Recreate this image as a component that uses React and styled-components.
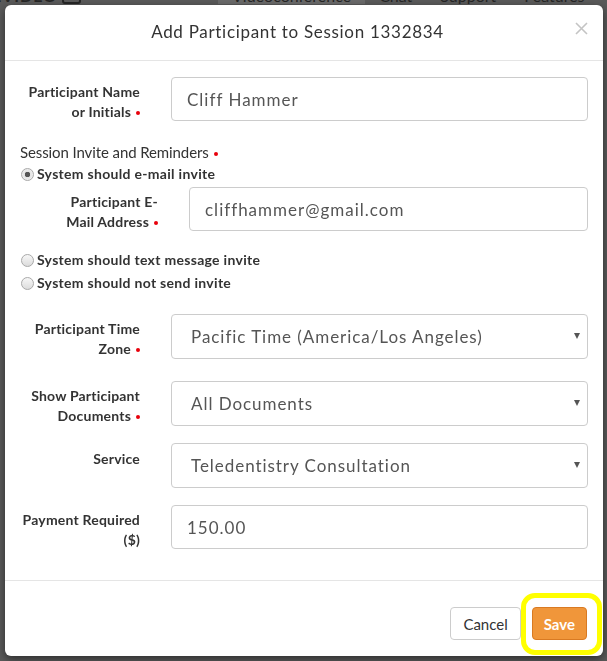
import React from 'react';
import styled, { createGlobalStyle } from 'styled-components';

const GlobalStyle = createGlobalStyle`
	html, body {
		margin: 0;
		background: #5a5a5a;
		font-family: Lato, "Open Sans", sans-serif;
		color: #333;
	}
	* {
		box-sizing: border-box;
	}
`;

// page behind the dimmed overlay, only its top edge peeks out
const PageNav = styled.div`
	display: flex;
	align-items: flex-end;
	height: 8px;
	margin-top: -4px;
	overflow: hidden;
	font-size: 16px;
	line-height: 16px;
	color: #262626;
`;

const Logo = styled.div`
	display: flex;
	align-items: flex-end;
	gap: 5px;
	margin-left: -8px;
	width: 238px;
	font-weight: 700;
	letter-spacing: 1px;
`;

const LogoBox = styled.span`
	display: inline-block;
	width: 19px;
	height: 12px;
	border: 2px solid #262626;
	border-radius: 3px;
`;

const NavItem = styled.span`
	padding: 0 14px;
	height: 16px;
	background: ${(p) => (p.$active ? '#6b6b6b' : 'transparent')};
`;

const Overlay = styled.div`
	position: fixed;
	inset: 0;
	padding: 5px 4px 0 5px;
`;

const Modal = styled.div`
	width: 598px;
	background: #fff;
	border-radius: 6px;
	box-shadow: 0 3px 9px rgba(0, 0, 0, 0.5);
`;

const Header = styled.div`
	display: flex;
	align-items: center;
	height: 56px;
	padding: 0 15px;
	border-bottom: 1px solid #e5e5e5;
`;

const Title = styled.h4`
	flex: 1;
	margin: 0;
	text-align: center;
	font-size: 17px;
	font-weight: 400;
	letter-spacing: 0.7px;
	color: #333;
	padding-bottom: 3px;
`;

const Close = styled.button`
	display: flex;
	width: 13px;
	height: 13px;
	padding: 0;
	border: 0;
	background: none;
	margin-top: -8px;
`;

const Body = styled.div`
	padding: 0 15px 30px;
`;

const Row = styled.div`
	display: grid;
	grid-template-columns: ${(p) => (p.$indent ? '138px' : '120px')} 1fr;
	column-gap: 31px;
	align-items: start;
	margin-top: ${(p) => p.$top || 0}px;
`;

const Label = styled.label`
	padding-top: ${(p) => (p.$single ? 6 : 5)}px;
	text-align: right;
	font-size: 14px;
	font-weight: 700;
	letter-spacing: 0.2px;
	line-height: 20px;
	color: #333;
`;

const Required = styled.span`
	&::after {
		content: '';
		display: inline-block;
		width: 4px;
		height: 4px;
		margin-left: 5px;
		border-radius: 50%;
		background: #e8000b;
		vertical-align: middle;
	}
`;

const Input = styled.input`
	width: 100%;
	height: 44px;
	padding: 0 0 0 15px;
	border: 1px solid #ccc;
	border-radius: 4px;
	font-family: Lato, "Open Sans", sans-serif;
	font-size: 17px;
	letter-spacing: 1px;
	color: #555;
	outline: none;
`;

const SelectWrap = styled.div`
	position: relative;
`;

const Select = styled.select`
	width: 100%;
	height: 45px;
	padding: 0 30px 0 19px;
	appearance: none;
	border: 1px solid #ccc;
	border-radius: 4px;
	background: #fff;
	font-family: Lato, "Open Sans", sans-serif;
	font-size: 17px;
	letter-spacing: 0.95px;
	color: #555;
	outline: none;
`;

const Caret = styled.span`
	position: absolute;
	right: 8px;
	top: 19px;
	width: 0;
	height: 0;
	border-left: 3.5px solid transparent;
	border-right: 3.5px solid transparent;
	border-top: 6px solid #555;
	pointer-events: none;
`;

const GroupLabel = styled.div`
	margin-top: ${(p) => p.$top || 0}px;
	font-size: 15px;
	letter-spacing: -0.1px;
	line-height: 20px;
	color: #333;
`;

const RadioLine = styled.label`
	display: flex;
	align-items: center;
	gap: 3px;
	margin-top: ${(p) => p.$top || 0}px;
	font-size: 14px;
	font-weight: 700;
	letter-spacing: 0.3px;
	line-height: 20px;
	color: #333;
`;

const RadioDot = styled.span`
	width: 13px;
	height: 13px;
	margin-left: 1px;
	border: 1px solid #a9a9a9;
	border-radius: 50%;
	background: ${(p) =>
		p.$checked
			? 'radial-gradient(circle, #555 0 2.5px, #e4e4e4 3px, #f5f5f5 100%)'
			: 'linear-gradient(#f7f7f7, #dcdcdc)'};
`;

const Footer = styled.div`
	display: flex;
	justify-content: flex-end;
	gap: 11px;
	padding: 26px 16px 16px;
	border-top: 1px solid #e5e5e5;
`;

const Button = styled.button`
	position: relative;
	height: 33px;
	padding: 0 ${(p) => (p.$primary ? 11 : 12)}px;
	border: 1px solid ${(p) => (p.$primary ? '#d97a22' : '#ccc')};
	border-radius: 4px;
	background: ${(p) => (p.$primary ? '#f0963a' : '#fff')};
	color: ${(p) => (p.$primary ? '#fff' : '#333')};
	font-family: Lato, "Open Sans", sans-serif;
	font-size: 15px;
	font-weight: ${(p) => (p.$primary ? 700 : 400)};
`;

const Highlight = styled.span`
	position: absolute;
	left: -12px;
	right: -16px;
	top: -15px;
	bottom: -16px;
	border: 5px solid #ffff00;
	border-radius: 14px;
	pointer-events: none;
`;

function Field({ label, required, single, children, ...rest }) {
	return (
		<Row {...rest}>
			<Label $single={single}>
				{required ? <Required>{label}</Required> : label}
			</Label>
			{children}
		</Row>
	);
}

function Dropdown({ value }) {
	return (
		<SelectWrap>
			<Select defaultValue={value}>
				<option>{value}</option>
			</Select>
			<Caret />
		</SelectWrap>
	);
}

export default function App() {
	return (
		<>
			<GlobalStyle />
			<PageNav>
				<Logo>
					EVIDEO <LogoBox />
				</Logo>
				<NavItem $active>Videoconference</NavItem>
				<NavItem>Chat</NavItem>
				<NavItem>Support</NavItem>
				<NavItem>Features ▾</NavItem>
			</PageNav>
			<Overlay>
				<Modal>
					<Header>
						<Title>Add Participant to Session 1332834</Title>
						<Close aria-label="Close">
							<svg width="13" height="13" viewBox="0 0 13 13">
								<path d="M1 1L12 12M12 1L1 12" stroke="#c4c4c4" strokeWidth="1.6" />
							</svg>
						</Close>
					</Header>
					<Body>
						<Field $top={16} required label={<>Participant Name<br />or Initials</>}>
							<Input defaultValue="Cliff Hammer" />
						</Field>

						<GroupLabel $top={20}>
							<Required>Session Invite and Reminders</Required>
						</GroupLabel>
						<RadioLine $top={2}>
							<RadioDot $checked /> System should e-mail invite
						</RadioLine>
						<Field $indent $top={3} required label={<>Participant E-<br />Mail Address</>}>
							<Input defaultValue="cliffhammer@gmail.com" />
						</Field>
						<RadioLine $top={18}>
							<RadioDot /> System should text message invite
						</RadioLine>
						<RadioLine $top={3}>
							<RadioDot /> System should not send invite
						</RadioLine>

						<Field $top={21} required label={<>Participant Time<br />Zone</>}>
							<Dropdown value="Pacific Time (America/Los Angeles)" />
						</Field>
						<Field $top={22} required label={<>Show Participant<br />Documents</>}>
							<Dropdown value="All Documents" />
						</Field>
						<Field $top={17} single label="Service">
							<Dropdown value="Teledentistry Consultation" />
						</Field>
						<Field $top={17} label={<>Payment Required<br />($)</>}>
							<Input defaultValue="150.00" />
						</Field>
					</Body>
					<Footer>
						<Button>Cancel</Button>
						<Button $primary>
							Save
							<Highlight />
						</Button>
					</Footer>
				</Modal>
			</Overlay>
		</>
	);
}
